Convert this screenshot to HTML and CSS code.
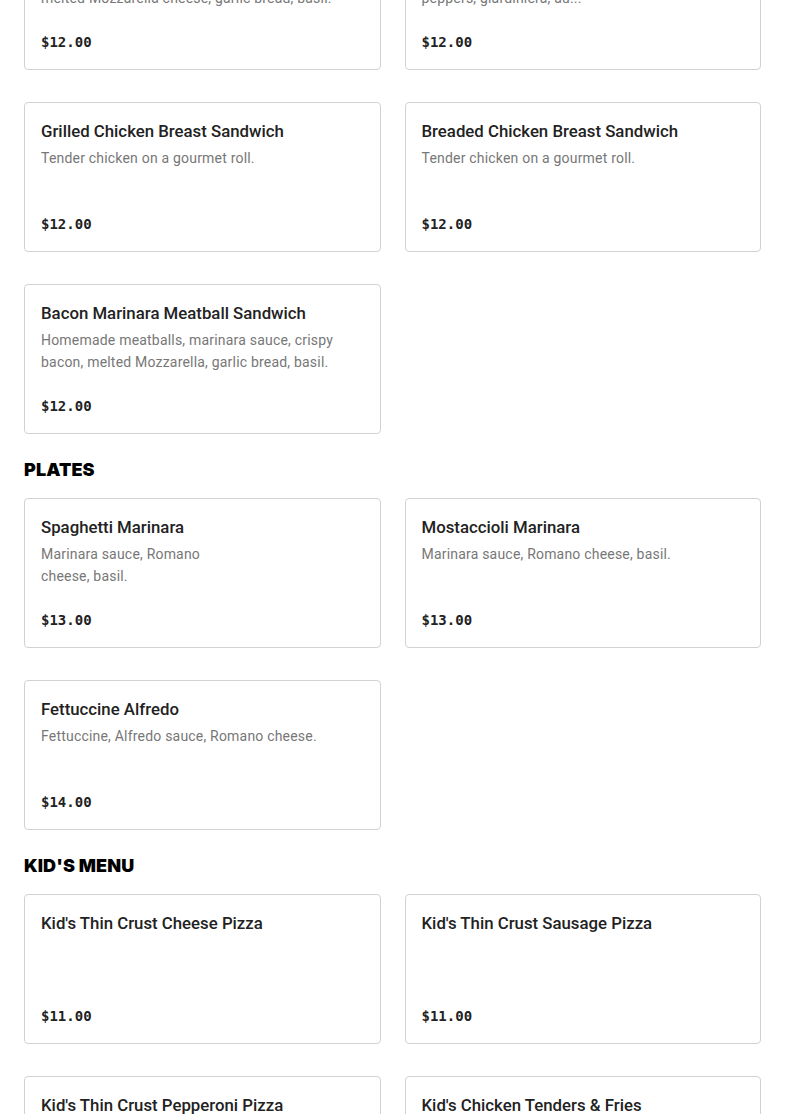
FILE: index.html
```html
<!DOCTYPE html>
<html lang="en">
<head>
<meta charset="utf-8">
<title>Menu</title>
<link rel="stylesheet" href="styles.css">
</head>
<body>
<main class="menu">
  <section class="section">
    <div class="grid">
      <article class="card">
        <h3 class="title">Meatball Sandwich</h3>
        <p class="desc">Homemade meatballs, marinara sauce,<br>melted Mozzarella cheese, garlic bread, basil.</p>
        <div class="price">$12.00</div>
      </article>
      <article class="card">
        <h3 class="title">Italian Beef Sandwich</h3>
        <p class="desc">Thinly sliced Italian beef, sweet &amp; hot<br>peppers, giardiniera, au...</p>
        <div class="price">$12.00</div>
      </article>
      <article class="card">
        <h3 class="title">Grilled Chicken Breast Sandwich</h3>
        <p class="desc">Tender chicken on a gourmet roll.</p>
        <div class="price">$12.00</div>
      </article>
      <article class="card">
        <h3 class="title">Breaded Chicken Breast Sandwich</h3>
        <p class="desc">Tender chicken on a gourmet roll.</p>
        <div class="price">$12.00</div>
      </article>
      <article class="card">
        <h3 class="title">Bacon Marinara Meatball Sandwich</h3>
        <p class="desc">Homemade meatballs, marinara sauce, crispy bacon, melted Mozzarella, garlic bread, basil.</p>
        <div class="price">$12.00</div>
      </article>
    </div>
  </section>

  <section class="section">
    <h2 class="heading">PLATES</h2>
    <div class="grid">
      <article class="card">
        <h3 class="title">Spaghetti Marinara</h3>
        <p class="desc desc-narrow">Marinara sauce, Romano cheese, basil.</p>
        <div class="price">$13.00</div>
      </article>
      <article class="card">
        <h3 class="title">Mostaccioli Marinara</h3>
        <p class="desc">Marinara sauce, Romano cheese, basil.</p>
        <div class="price">$13.00</div>
      </article>
      <article class="card">
        <h3 class="title">Fettuccine Alfredo</h3>
        <p class="desc">Fettuccine, Alfredo sauce, Romano cheese.</p>
        <div class="price">$14.00</div>
      </article>
    </div>
  </section>

  <section class="section">
    <h2 class="heading">KID'S MENU</h2>
    <div class="grid">
      <article class="card">
        <h3 class="title">Kid's Thin Crust Cheese Pizza</h3>
        <div class="price">$11.00</div>
      </article>
      <article class="card">
        <h3 class="title">Kid's Thin Crust Sausage Pizza</h3>
        <div class="price">$11.00</div>
      </article>
      <article class="card">
        <h3 class="title">Kid's Thin Crust Pepperoni Pizza</h3>
        <div class="price">$11.00</div>
      </article>
      <article class="card">
        <h3 class="title">Kid's Chicken Tenders &amp; Fries</h3>
        <div class="price">$11.00</div>
      </article>
    </div>
  </section>
</main>
</body>
</html>
```

FILE: styles.css
```css
html, body {
  margin: 0;
  padding: 0;
  background: #ffffff;
}

body {
  font-family: Roboto, "Noto Sans", "Liberation Sans", sans-serif;
  color: #222222;
  overflow: hidden;
}

.menu {
  padding: 0 24px;
  margin-top: -80px;
}

.heading {
  margin: 24px 0 16px;
  font-family: Inter, "Liberation Sans", sans-serif;
  font-size: 18px;
  line-height: 24px;
  font-weight: 900;
  color: #000000;
  letter-spacing: 0.1px;
}

.grid {
  display: grid;
  grid-template-columns: 1fr 1fr;
  column-gap: 24px;
  row-gap: 32px;
}

.card {
  box-sizing: border-box;
  min-height: 150px;
  border: 1px solid #d2d2d2;
  border-radius: 4px;
  padding: 16px;
  display: flex;
  flex-direction: column;
  background: #ffffff;
}

.title {
  margin: 0;
  font-size: 16.8px;
  line-height: 24px;
  font-weight: 500;
  color: #222222;
}

.desc {
  margin: 4px 0 0;
  font-size: 14px;
  line-height: 22px;
  letter-spacing: 0.2px;
  color: #777777;
}

.desc-narrow {
  max-width: 190px;
}

.price {
  margin-top: auto;
  padding-top: 22px;
  font-family: "DejaVu Sans Mono", "Liberation Mono", monospace;
  font-size: 14px;
  line-height: 22px;
  font-weight: 700;
  color: #222222;
}
```
